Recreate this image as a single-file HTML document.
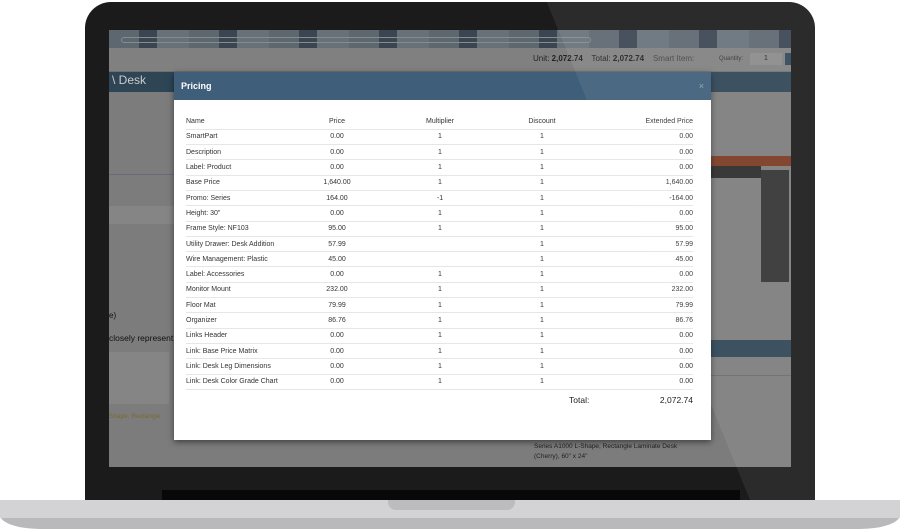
<!DOCTYPE html>
<html><head><style>
*{margin:0;padding:0;box-sizing:border-box}
body{width:900px;height:529px;background:#fff;position:relative;overflow:hidden;font-family:"Liberation Sans",sans-serif}
.a{position:absolute}
.bezel{left:85px;top:2px;width:730px;height:505px;background:#1b1b1b;border-radius:26px 26px 0 0}
.screen{left:109px;top:30px;width:682px;height:437px;background:#7c7c7c;overflow:hidden}
.modal{left:174px;top:72px;width:537px;height:368px;background:#fff;box-shadow:0 2px 6px rgba(0,0,0,.5)}
.mh{height:28px;background:#3e5e79;color:#fff;font-weight:bold;font-size:9px;padding:9px 7px}
table{position:absolute;left:12px;top:14px;width:507px;border-collapse:collapse;font-size:7px;color:#333;table-layout:fixed}
td{height:15.3px;border-bottom:1px solid #e6e6e6;padding:0 0}
td:nth-child(2),td:nth-child(3),td:nth-child(4){text-align:center}
td:nth-child(5){text-align:right}
</style></head><body>
<div class="a bezel"></div>
<div class="a" style="left:162px;top:490px;width:578px;height:12px;background:#080808"></div>
<div class="a screen">
 <div class="a" style="left:0;top:0;width:682px;height:18px;background:repeating-linear-gradient(90deg,#5d6770 0 30px,#3a4552 30px 48px,#66717a 48px 80px);"></div>
 <div class="a" style="left:12px;top:7px;width:470px;height:6px;border:1px solid #8a8a8a;border-radius:3px"></div>
 <div class="a" style="left:0;top:18px;width:682px;height:24px;background:#808080;border-bottom:1px solid #707070"></div>
 <div class="a" style="left:424px;top:24px;font-size:8px;color:#222">Unit: <b>2,072.74</b>&nbsp;&nbsp;&nbsp; Total: <b>2,072.74</b>&nbsp;&nbsp;&nbsp; <span style="color:#444">Smart Item:</span></div>
 <div class="a" style="left:610px;top:26px;font-size:6px;color:#333">Quantity:</div>
 <div class="a" style="left:641px;top:23px;width:32px;height:12px;background:#8a8a8a;font-size:7px;text-align:center;color:#222;padding-top:2px">1</div>
 <div class="a" style="left:676px;top:23px;width:8px;height:12px;background:#2e475b"></div>
 <div class="a" style="left:0;top:42px;width:682px;height:20px;background:#2e4556"></div>
 <div class="a" style="left:3px;top:43px;font-size:12px;color:#ccc">\ Desk</div>
 <div class="a" style="left:0;top:144px;width:65px;height:1px;background:#6a6a7a"></div>
 <div class="a" style="left:0;top:176px;width:65px;height:18px;background:#858585"></div>
 <div class="a" style="left:0;top:281px;font-size:8px;color:#111">e)</div>
 <div class="a" style="left:0;top:303px;font-size:8.5px;color:#111">closely represent</div>
 <div class="a" style="left:0;top:322px;width:60px;height:52px;background:#858585"></div>
 <div class="a" style="left:0;top:383px;font-size:6.5px;color:#7a6a30">Shape, Rectangle</div>
 <div class="a" style="left:602px;top:126px;width:80px;height:10px;background:#7a3a22"></div>
 <div class="a" style="left:602px;top:136px;width:50px;height:12px;background:#2a2a2a"></div>
 <div class="a" style="left:652px;top:140px;width:28px;height:112px;background:#333"></div>
 <div class="a" style="left:602px;top:310px;width:80px;height:17px;background:#2e4556"></div>
 <div class="a" style="left:602px;top:345px;width:80px;height:1px;background:#6a6a6a"></div>
 <div class="a" style="left:425px;top:412px;font-size:6.5px;color:#222;line-height:10px">Series A1000 L-Shape, Rectangle Laminate Desk<br>(Cherry), 60" x 24"</div>
</div>
<div class="a modal">
 <div class="mh">Pricing<span style="float:right;color:#8aa;font-weight:normal">×</span></div>
 <div style="position:relative">
 <table>
 <colgroup><col style="width:111px"><col style="width:80px"><col style="width:126px"><col style="width:78px"><col></colgroup>
 <tr><td>Name</td><td>Price</td><td>Multiplier</td><td>Discount</td><td>Extended Price</td></tr>
 <tr><td>SmartPart</td><td>0.00</td><td>1</td><td>1</td><td>0.00</td></tr>
 <tr><td>Description</td><td>0.00</td><td>1</td><td>1</td><td>0.00</td></tr>
 <tr><td>Label: Product</td><td>0.00</td><td>1</td><td>1</td><td>0.00</td></tr>
 <tr><td>Base Price</td><td>1,640.00</td><td>1</td><td>1</td><td>1,640.00</td></tr>
 <tr><td>Promo: Series</td><td>164.00</td><td>-1</td><td>1</td><td>-164.00</td></tr>
 <tr><td>Height: 30"</td><td>0.00</td><td>1</td><td>1</td><td>0.00</td></tr>
 <tr><td>Frame Style: NF103</td><td>95.00</td><td>1</td><td>1</td><td>95.00</td></tr>
 <tr><td style="white-space:nowrap">Utility Drawer: Desk Addition</td><td>57.99</td><td></td><td>1</td><td>57.99</td></tr>
 <tr><td style="white-space:nowrap">Wire Management: Plastic</td><td>45.00</td><td></td><td>1</td><td>45.00</td></tr>
 <tr><td>Label: Accessories</td><td>0.00</td><td>1</td><td>1</td><td>0.00</td></tr>
 <tr><td>Monitor Mount</td><td>232.00</td><td>1</td><td>1</td><td>232.00</td></tr>
 <tr><td>Floor Mat</td><td>79.99</td><td>1</td><td>1</td><td>79.99</td></tr>
 <tr><td>Organizer</td><td>86.76</td><td>1</td><td>1</td><td>86.76</td></tr>
 <tr><td>Links Header</td><td>0.00</td><td>1</td><td>1</td><td>0.00</td></tr>
 <tr><td style="white-space:nowrap">Link: Base Price Matrix</td><td>0.00</td><td>1</td><td>1</td><td>0.00</td></tr>
 <tr><td style="white-space:nowrap">Link: Desk Leg Dimensions</td><td>0.00</td><td>1</td><td>1</td><td>0.00</td></tr>
 <tr><td style="white-space:nowrap">Link: Desk Color Grade Chart</td><td>0.00</td><td>1</td><td>1</td><td>0.00</td></tr>
 </table>
 </div>
 <div class="a" style="left:395px;top:323px;font-size:8.5px;color:#222">Total:</div>
 <div class="a" style="right:18px;top:323px;font-size:8.5px;color:#222">2,072.74</div>
</div>
<svg class="a" style="left:0;top:0" width="900" height="529"><polygon points="546,0 815,0 815,500 750,500" fill="#fff" opacity="0.07"/></svg>
<div class="a" style="left:0;top:500px;width:900px;height:29px;background:#b9b9bb;border-radius:0 0 40px 40px/0 0 14px 14px"></div>
<div class="a" style="left:0;top:500px;width:900px;height:18px;background:#d3d3d5"></div>
<div class="a" style="left:388px;top:500px;width:127px;height:10px;background:#bcbcbe;border-radius:0 0 8px 8px"></div>
</body></html>
